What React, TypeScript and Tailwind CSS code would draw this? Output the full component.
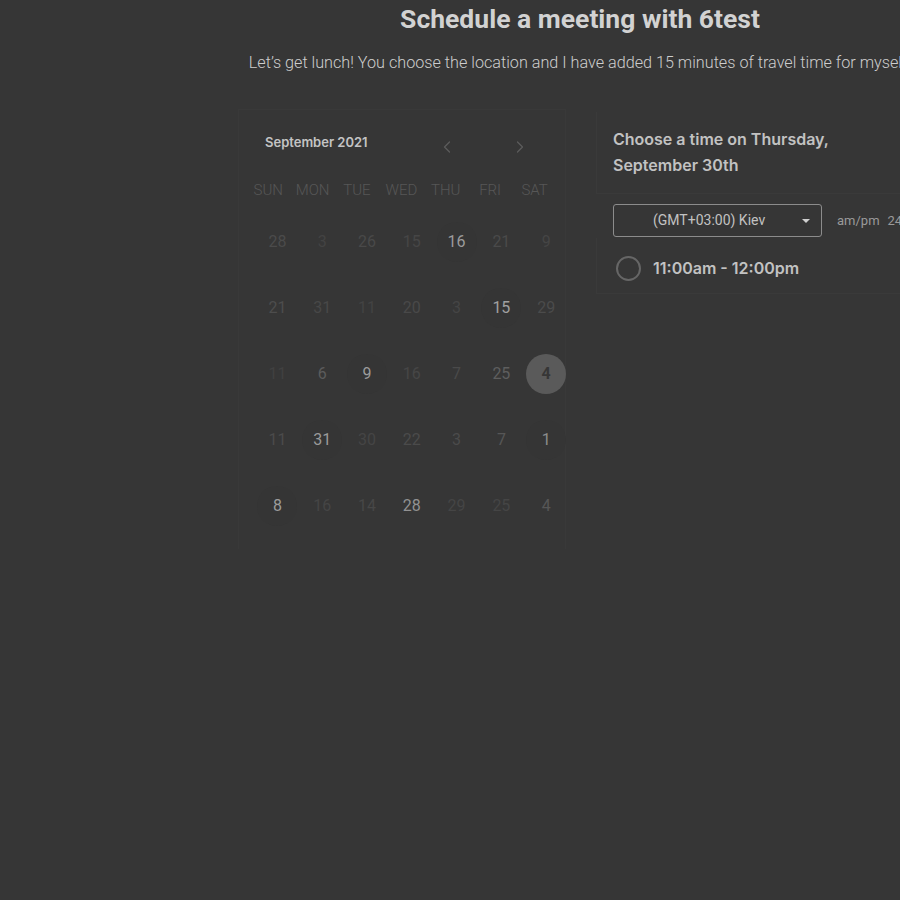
import React from "react";
import { ChevronLeft, ChevronRight } from "lucide-react";

type Cell = { n: string; c: string; ring?: boolean; sel?: boolean };

const rows: Cell[][] = [
  [
    { n: "28", c: "#4b4b4b" },
    { n: "3", c: "#434343" },
    { n: "26", c: "#494949" },
    { n: "15", c: "#464646" },
    { n: "16", c: "#9c9c9c", ring: true },
    { n: "21", c: "#4a4a4a" },
    { n: "9", c: "#454545" },
  ],
  [
    { n: "21", c: "#4d4d4d" },
    { n: "31", c: "#484848" },
    { n: "11", c: "#434343" },
    { n: "20", c: "#494949" },
    { n: "3", c: "#454545" },
    { n: "15", c: "#a0a0a0", ring: true },
    { n: "29", c: "#4b4b4b" },
  ],
  [
    { n: "11", c: "#414141" },
    { n: "6", c: "#5c5c5c" },
    { n: "9", c: "#9c9c9c", ring: true },
    { n: "16", c: "#464646" },
    { n: "7", c: "#4a4a4a" },
    { n: "25", c: "#5e5e5e" },
    { n: "4", c: "#363636", sel: true },
  ],
  [
    { n: "11", c: "#4b4b4b" },
    { n: "31", c: "#9a9a9a", ring: true },
    { n: "30", c: "#454545" },
    { n: "22", c: "#4b4b4b" },
    { n: "3", c: "#4b4b4b" },
    { n: "7", c: "#565656" },
    { n: "1", c: "#8c8c8c", ring: true },
  ],
  [
    { n: "8", c: "#9c9c9c", ring: true },
    { n: "16", c: "#454545" },
    { n: "14", c: "#474747" },
    { n: "28", c: "#929292" },
    { n: "29", c: "#454545" },
    { n: "25", c: "#454545" },
    { n: "4", c: "#565656" },
  ],
];

const days = ["SUN", "MON", "TUE", "WED", "THU", "FRI", "SAT"];

export default function App() {
  return (
    <div
      className="w-[900px] h-[900px] overflow-hidden bg-[#363636]"
      style={{ fontFamily: "Roboto, 'Liberation Sans', sans-serif" }}
    >
      <div className="ml-[238px] w-[684px] flex flex-col items-center">
        <h1 className="pt-[2px] text-[26.5px] leading-[34px] font-bold text-[#d2d2d2] whitespace-nowrap">
          Schedule a meeting with 6test
        </h1>
        <p className="mt-[15px] text-[16.2px] leading-[24px] font-light text-[#cdcdcd] whitespace-nowrap">
          Let’s get lunch! You choose the location and I have added 15 minutes of travel time for myself.
        </p>
      </div>

      <div className="mt-[34px] ml-[238px] flex items-start">
        {/* Calendar */}
        <div className="w-[328px] h-[440px] border-t border-l border-r border-[#393939] flex flex-col">
          <div className="mt-[23px] h-[20px] flex items-center">
            <span
              className="ml-[26px] text-[13px] font-semibold text-[#c4c4c4]"
              style={{ fontFamily: "Inter, sans-serif" }}
            >
              September 2021
            </span>
            <div className="ml-[69px] mt-[8px] flex items-center text-[#5c5c5c]">
              <ChevronLeft size={20} strokeWidth={1.5} />
              <ChevronRight size={20} strokeWidth={1.5} className="ml-[53px]" />
            </div>
          </div>
          <div className="mt-[27px] ml-[7px] grid grid-cols-[repeat(7,44.4px)]">
            {days.map((d) => (
              <div
                key={d}
                className="text-center text-[15px] leading-[20px] font-light text-[#575757]"
              >
                {d}
              </div>
            ))}
          </div>
          <div className="mt-[9px] ml-[16px] grid grid-cols-[repeat(7,44.8px)] grid-rows-[repeat(5,66px)]">
            {rows.flat().map((cell, i) => (
              <div key={i} className="flex items-center justify-center">
                <div
                  className={
                    cell.sel
                      ? "w-[40px] h-[40px] rounded-full bg-[#5a5a5a] flex items-center justify-center text-[16px] font-bold"
                      : cell.ring
                      ? "w-[40px] h-[40px] rounded-full bg-[#353535] flex items-center justify-center text-[16px]"
                      : "w-[40px] h-[40px] rounded-full flex items-center justify-center text-[16px]"
                  }
                  style={{ color: cell.c }}
                >
                  {cell.n}
                </div>
              </div>
            ))}
          </div>
        </div>

        {/* Right panel */}
        <div className="ml-[30px] w-[400px] flex flex-col" style={{ fontFamily: "Inter, sans-serif" }}>
          <div className="mt-[3px] border-l border-b border-[#3a3a3a] pl-[16px] pt-[14px] pb-[15px]">
            <div className="text-[16px] leading-[26px] font-semibold text-[#c2c2c2]">
              Choose a time on Thursday,
              <br />
              September 30th
            </div>
          </div>
          <div className="mt-[10px] pl-[17px] flex items-center">
            <div
              className="w-[209px] h-[33px] rounded-[3px] border border-[#8c8c8c] flex items-center"
              style={{ fontFamily: "Roboto, sans-serif" }}
            >
              <span className="ml-[39px] text-[14px] text-[#c2c2c2]">(GMT+03:00) Kiev</span>
              <svg className="ml-auto mr-[11px]" width="8" height="4" viewBox="0 0 8 4">
                <path d="M0 0 L8 0 L4 4 Z" fill="#d0d0d0" />
              </svg>
            </div>
            <span
              className="ml-[15px] text-[13px] text-[#9a9a9a]"
              style={{ fontFamily: "Roboto, sans-serif" }}
            >
              am/pm
            </span>
            <span
              className="ml-[8px] text-[13px] text-[#9a9a9a]"
              style={{ fontFamily: "Roboto, sans-serif" }}
            >
              24h
            </span>
          </div>
          <div className="mt-[1px] h-[56px] border-l border-b border-[#3a3a3a] flex items-center pl-[19px]">
            <div className="w-[25px] h-[25px] rounded-full border-2 border-[#666666] mt-[5px]" />
            <span className="ml-[12px] mt-[5px] text-[16px] font-semibold text-[#c2c2c2]">
              11:00am - 12:00pm
            </span>
          </div>
        </div>
      </div>
    </div>
  );
}
